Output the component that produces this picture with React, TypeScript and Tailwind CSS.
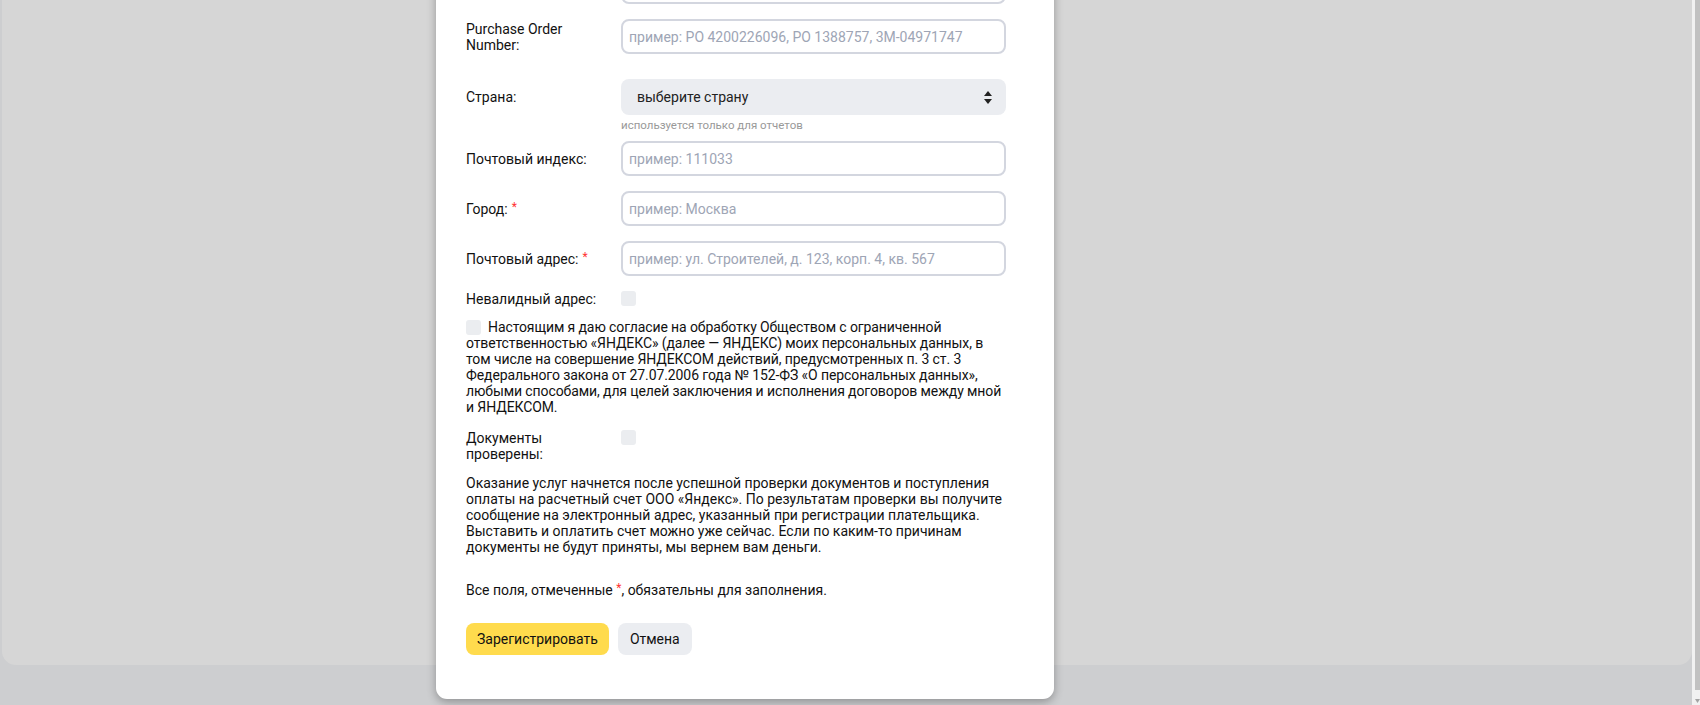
import React from 'react';

const Req = () => <span className="ml-[4px] text-[12px] leading-none text-[#ff3333] align-[3px]">*</span>;

function Field({ label, placeholder, required }: { label: string; placeholder: string; required?: boolean }) {
  return (
    <div className="flex items-center">
      <label className="w-[140px] mr-[15px] leading-[16px]">
        {label}
        {required && <Req />}
      </label>
      <input
        placeholder={placeholder}
        className="w-[385px] h-[35px] rounded-[8px] border-2 border-[#d3d6df] px-[6px] text-[14px] outline-none placeholder:text-[#9ea5b5]"
      />
    </div>
  );
}

const Box = ({ className = '' }: { className?: string }) => (
  <input type="checkbox" className={`appearance-none w-[15px] h-[15px] rounded-[3px] bg-[#ebedf0] ${className}`} />
);

export default function App() {
  return (
    <div className="flex w-[1700px] h-[705px] overflow-hidden bg-[#cdced0] font-[Roboto,sans-serif] text-[14px] text-[#111]">
      {/* PAGE */}
      <div className="relative flex-1">
        <div className="ml-[2px] h-[665px] bg-[#d6d6d6] rounded-b-[14px]"></div>

        {/* MODAL */}
        <div className="absolute left-[436px] top-[-31px] w-[618px] bg-white rounded-b-[11px] shadow-[0_3px_10px_rgba(0,0,0,0.3)] pl-[30px] pr-[48px] pb-[44px]">
          <div className="flex items-center">
            <div className="w-[155px]"></div>
            <input className="w-[385px] h-[35px] rounded-[8px] border-2 border-[#d3d6df]" />
          </div>

          <div className="mt-[15px]">
            <Field label="Purchase Order Number:" placeholder="пример: PO 4200226096, PO 1388757, 3M-04971747" />
          </div>

          <div className="mt-[25px] flex items-center">
            <label className="w-[140px] mr-[15px] leading-[16px]">Страна:</label>
            <div className="relative w-[385px] h-[36px] rounded-[8px] bg-[#ebedf1] flex items-center pl-[16px] pr-[14px] justify-between">
              <span className="text-[#222]">выберите страну</span>
              <svg width="8" height="13" viewBox="0 0 8 13" className="fill-[#222]">
                <path d="M4 0 L8 5 H0 Z" />
                <path d="M0 8 H8 L4 13 Z" />
              </svg>
            </div>
          </div>
          <div className="mt-[4px] ml-[155px] text-[11.5px] leading-[12px] text-[#999]">используется только для отчетов</div>

          <div className="mt-[10px]">
            <Field label="Почтовый индекс:" placeholder="пример: 111033" />
          </div>
          <div className="mt-[15px]">
            <Field label="Город:" placeholder="пример: Москва" required />
          </div>
          <div className="mt-[15px]">
            <Field label="Почтовый адрес:" placeholder="пример: ул. Строителей, д. 123, корп. 4, кв. 567" required />
          </div>

          <div className="mt-[15px] flex items-start">
            <label className="w-[140px] mr-[15px] leading-[16px]">Невалидный адрес:</label>
            <Box />
          </div>

          <p className="mt-[12px] leading-[16px] tracking-[-0.1px]">
            <Box className="align-[-3px] mr-[7px]" />
            Настоящим я даю согласие на обработку Обществом с ограниченной ответственностью «ЯНДЕКС» (далее — ЯНДЕКС) моих персональных данных, в том числе на совершение ЯНДЕКСОМ действий, предусмотренных п. 3 ст. 3 Федерального закона от 27.07.2006 года № 152-ФЗ «О персональных данных», любыми способами, для целей заключения и исполнения договоров между мной и ЯНДЕКСОМ.
          </p>

          <div className="mt-[15px] flex items-start">
            <label className="w-[140px] mr-[15px] leading-[16px]">Документы проверены:</label>
            <Box />
          </div>

          <p className="mt-[13px] leading-[16px]">
            Оказание услуг начнется после успешной проверки документов и поступления оплаты на расчетный счет ООО «Яндекс». По результатам проверки вы получите сообщение на электронный адрес, указанный при регистрации плательщика. Выставить и оплатить счет можно уже сейчас. Если по каким-то причинам документы не будут приняты, мы вернем вам деньги.
          </p>

          <p className="mt-[25px] leading-[16px]">
            Все поля, отмеченные <span className="text-[12px] text-[#ff3333] align-[3px]">*</span>, обязательны для заполнения.
          </p>

          <div className="mt-[25px] flex gap-[9px]">
            <button className="h-[32px] px-[11px] rounded-[8px] bg-[#ffdb4d] text-[#111]">Зарегистрировать</button>
            <button className="h-[32px] px-[12px] rounded-[8px] bg-[#ebedf1] text-[#111]">Отмена</button>
          </div>
        </div>
      </div>

      {/* SCROLLBAR */}
      <div className="w-[8px] h-full bg-[#f1f1f1] flex flex-col">
        <div className="ml-[3px] h-[690px] bg-[#c1c1c1]"></div>
        <div className="flex-1 flex items-end justify-end pb-[2px]">
          <svg width="5" height="4" viewBox="0 0 5 4" className="fill-[#a3a3a3]"><path d="M0 0 H5 L2.5 4 Z" /></svg>
        </div>
      </div>
    </div>
  );
}
